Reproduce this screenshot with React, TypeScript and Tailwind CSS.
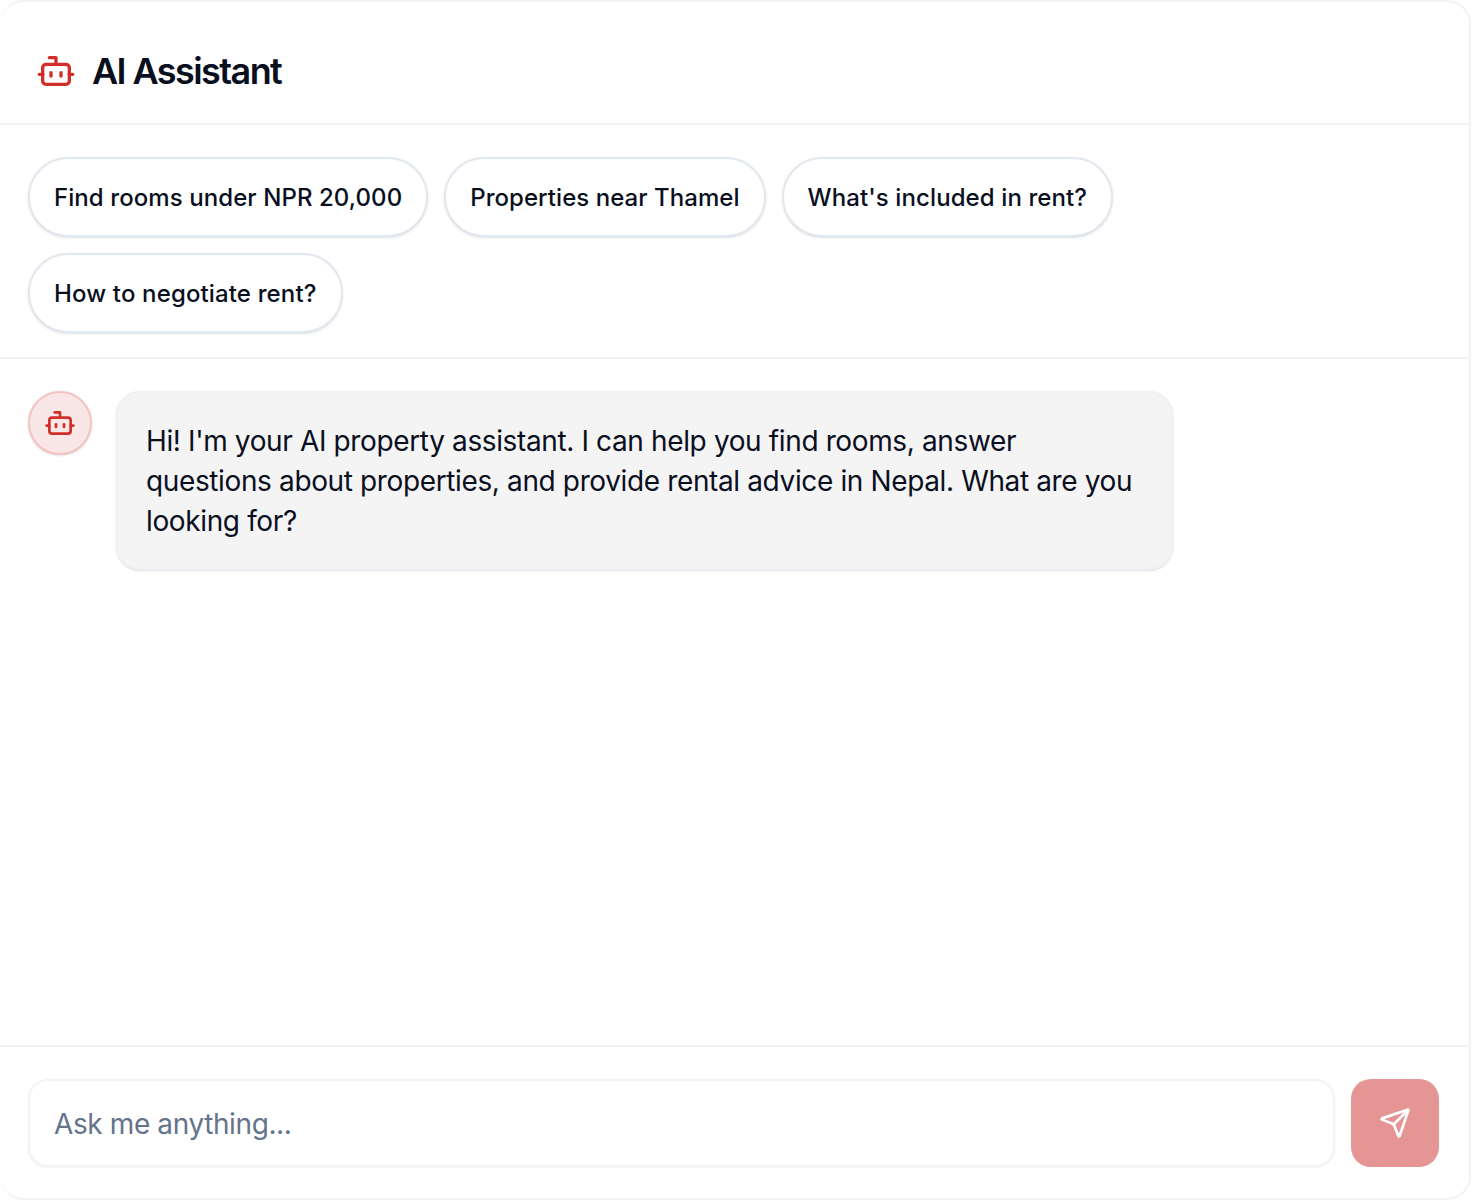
import { Bot, Send } from "lucide-react";

const chips = [
  { t: "Find rooms under NPR 20,000", c: "tracking-[0.08px]" },
  { t: "Properties near Thamel", c: "tracking-[0.05px]" },
  { t: "What's included in rent?", c: "tracking-[0.1px]" },
  { t: "How to negotiate rent?", c: "tracking-[0.14px]" },
];

export default function App() {
  return (
    <div className="h-[1200px] w-[1472px] overflow-hidden bg-white font-['Inter','Noto_Sans',sans-serif] text-[#0a0f1e]">
      <div className="flex h-[1200px] w-[1471px] flex-col rounded-[24px] border-2 border-l-0 border-[#f1f3f6] bg-white">
        <header className="flex h-[123px] shrink-0 items-center gap-4 border-b-2 border-[#f1f3f6] pt-[16px] pl-9">
          <Bot size={40} strokeWidth={2} className="text-[#d02f2a]" />
          <h1 className="text-[36px] leading-10 font-semibold tracking-[-1.58px]">AI Assistant</h1>
        </header>
        <div className="flex w-[1200px] shrink-0 flex-wrap gap-4 pt-8 pb-6 pl-7">
          {chips.map(({ t, c }) => (
            <button key={t} className={`h-20 rounded-full border-2 border-[#e2e8f0] bg-white px-6 pt-[1px] text-[24px] leading-8 font-medium shadow-sm ${c}`}>
              {t}
            </button>
          ))}
        </div>
        <main className="flex flex-1 items-start gap-6 border-t-2 border-[#f1f3f6] pt-8 pl-7">
          <div className="flex size-16 shrink-0 items-center justify-center rounded-full border-2 border-[#f5c2c0] bg-[#f9e6e6] shadow-sm">
            <Bot size={32} className="text-[#d02f2a]" />
          </div>
          <div className="w-[1057px] rounded-[24px] border-2 border-[#eef1f5] bg-[#f4f4f5] px-7 pt-7 pb-[27px] text-[28px] leading-10 tracking-[-0.37px] shadow-sm">
            Hi! I'm your AI property assistant. I can help you find rooms, answer questions about properties, and provide rental advice in Nepal. What are you looking for?
          </div>
        </main>
        <footer className="flex h-[153px] shrink-0 items-start gap-4 border-t-2 border-[#f1f3f6] pt-8 pl-7">
          <div className="flex h-[88px] w-[1307px] items-center rounded-[20px] border-2 border-[#f1f3f6] bg-white px-6 pt-[1px] text-[28px] tracking-[-0.39px] text-[#64748b] shadow-xs">
            Ask me anything...
          </div>
          <button className="flex size-[88px] items-center justify-center rounded-[20px] bg-[#e59594]">
            <Send size={32} className="text-white" />
          </button>
        </footer>
      </div>
    </div>
  );
}
